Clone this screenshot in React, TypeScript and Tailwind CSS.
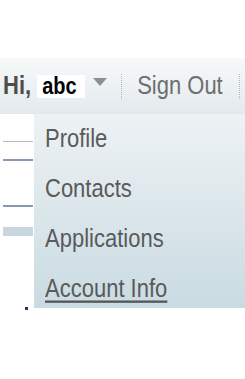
const menuItems = ["Profile", "Contacts", "Applications", "Account Info"];

const App = () => {
  return (
    <div className="w-[245px] h-[379px] bg-white overflow-hidden font-['Liberation_Sans',Arial,sans-serif]">
      <div className="h-[58px]" />

      {/* Header bar */}
      <header className="h-[56px] flex items-center bg-gradient-to-b from-[#f7f9fa] to-[#e3eaed]">
        <span className="ml-[3px] inline-block scale-y-[1.15] text-[22px] font-bold text-[#4d4d4d] leading-none">Hi,</span>
        <div className="ml-[6px] w-[48px] h-[23px] bg-white flex items-center pl-[5px]">
          <span className="inline-block scale-y-[1.15] text-[20px] font-bold text-black leading-none">abc</span>
        </div>
        <svg width="14" height="8" viewBox="0 0 14 8" className="ml-[8px] -mt-[8px]">
          <polygon points="0,0 14,0 7,8" fill="#8e8e8e" />
        </svg>
        <div className="ml-[14px] h-[25px] border-l border-dotted border-[#b5b5b5]" />
        <span className="ml-[15px] inline-block scale-y-[1.15] text-[22px] text-[#6e6e6e] leading-none">Sign Out</span>
        <div className="ml-[16px] h-[25px] border-l border-dotted border-[#b5b5b5]" />
      </header>

      <div className="flex">
        {/* Left edge of the page behind the menu */}
        <div className="w-[34px] h-[200px] flex flex-col">
          <div className="mt-[27px] ml-[3px] w-[30px] h-px bg-[#b6bcc4]" />
          <div className="mt-[17px] ml-[3px] w-[30px] h-[2px] bg-[#8999b0]" />
          <div className="mt-[44px] ml-[3px] w-[30px] h-[2px] bg-[#8999b0]" />
          <div className="mt-[20px] ml-[3px] w-[30px] h-[9px] bg-[#c8d6e0]" />
          <div className="mt-[71px] ml-[25px] w-[3px] h-[3px] bg-[#2c3366]" />
        </div>

        {/* Dropdown */}
        <nav className="flex-1 h-[194px] overflow-hidden pl-[11px] bg-gradient-to-b from-[#eef2f4] to-[#c9dbe2]">
          {menuItems.map((item, i) => (
            <div key={item} className="h-[50px] leading-[50px]">
              <a
                href="#"
                className={`inline-block scale-y-[1.15] text-[22px] text-[#5a5a5a] ${
                  i === 3 ? "underline decoration-2 underline-offset-[3px] decoration-[#555]" : ""
                }`}
              >
                {item}
              </a>
            </div>
          ))}
        </nav>
      </div>
    </div>
  );
};

export default App;
